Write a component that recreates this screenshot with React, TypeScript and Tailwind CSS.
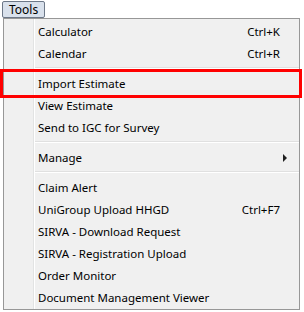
import React from "react";

type Item =
  | { type: "item"; label: string; shortcut?: string; sub?: boolean }
  | { type: "sep" };

const items: Item[] = [
  { type: "item", label: "Calculator", shortcut: "Ctrl+K" },
  { type: "item", label: "Calendar", shortcut: "Ctrl+R" },
  { type: "sep" },
  { type: "item", label: "Import Estimate" },
  { type: "item", label: "View Estimate" },
  { type: "item", label: "Send to IGC for Survey" },
  { type: "sep" },
  { type: "item", label: "Manage", sub: true },
  { type: "sep" },
  { type: "item", label: "Claim Alert" },
  { type: "item", label: "UniGroup Upload HHGD", shortcut: "Ctrl+F7" },
  { type: "item", label: "SIRVA - Download Request" },
  { type: "item", label: "SIRVA - Registration Upload" },
  { type: "item", label: "Order Monitor" },
  { type: "item", label: "Document Management Viewer" },
];

export default function App() {
  return (
    <div
      className="relative w-[304px] h-[312px] bg-white text-[11.5px] text-black"
      style={{ fontFamily: '"Noto Sans", "DejaVu Sans", sans-serif' }}
    >
      <div className="pt-[1px] pl-[2px]">
        <div className="w-[43px] h-[17px] border border-[#6d7888] rounded-[2px] bg-[#d9e1ec] flex items-center pl-[6px] leading-none text-[12px]">
          Tools
        </div>
      </div>
      <div className="ml-[3px] w-[297px] border border-[#979797] bg-[#f0f0f0] py-[1px] relative">
        <div className="absolute left-[29px] top-0 bottom-0 w-[1px] bg-[#e2e3e3]" />
        <div className="absolute left-[30px] top-0 bottom-0 w-[1px] bg-white" />
        {items.map((it, i) =>
          it.type === "sep" ? (
            <div key={i} className="h-[8px] pl-[30px] flex flex-col justify-center">
              <div className="h-[1px] bg-[#e0e0e0]" />
              <div className="h-[1px] bg-white" />
            </div>
          ) : (
            <div key={i} className="h-[22px] flex items-center pt-[2px] pl-[34px] pr-[19px] relative">
              <span className="flex-1 whitespace-nowrap">{it.label}</span>
              {it.shortcut && <span className="whitespace-nowrap">{it.shortcut}</span>}
              {it.sub && (
                <svg className="absolute right-[11px] top-[8px]" width="5" height="8" viewBox="0 0 5 8">
                  <path d="M0 0 L4 4 L0 8 Z" fill="#202020" />
                </svg>
              )}
            </div>
          )
        )}
      </div>
      <div className="absolute left-0 top-[69px] w-[302px] h-[29px] border-[3px] border-[#ff0000]" />
    </div>
  );
}
